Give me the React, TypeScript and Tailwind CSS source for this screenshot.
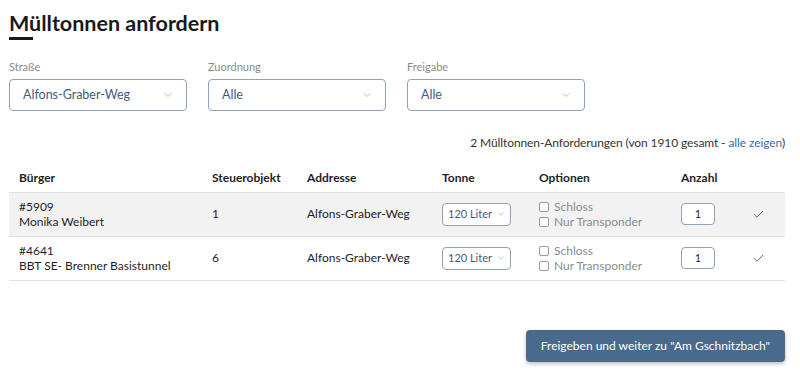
import React from 'react';
import { ChevronDown, Check } from 'lucide-react';

const font = { fontFamily: 'Lato, "Open Sans", sans-serif' };

type Row = { id: string; name: string; objekt: string; adresse: string };

const rows: Row[] = [
  { id: '#5909', name: 'Monika Weibert', objekt: '1', adresse: 'Alfons-Graber-Weg' },
  { id: '#4641', name: 'BBT SE- Brenner Basistunnel', objekt: '6', adresse: 'Alfons-Graber-Weg' },
];

const Filter: React.FC<{ label: string; value: string }> = ({ label, value }) => (
  <div className="flex flex-col w-[178px]">
    <span className="text-[11px] text-[#8a8a8a] leading-none mb-[7px]">{label}</span>
    <div className="h-8 rounded-[4px] border border-[#8fa3ba] bg-white flex items-center justify-between pl-[13px] pr-[12px]">
      <span className="text-[12.5px] text-[#3f5c7c]">{value}</span>
      <ChevronDown className="w-3 h-3 text-[#9aa5b1]" strokeWidth={1.5} />
    </div>
  </div>
);

const Box: React.FC<{ label: string }> = ({ label }) => (
  <div className="flex items-center gap-[5px] text-[12px] text-[#8c8c8c] leading-[15px]">
    <span className="w-[10px] h-[10px] border border-[#9a9a9a] rounded-[2px] bg-white" />
    {label}
  </div>
);

const App: React.FC = () => {
  return (
    <div className="w-[800px] h-[376px] bg-white text-[#1f1f1f] pl-[9px] pr-[15px] pt-[10px]" style={font}>
      <h1 className="text-[21.5px] font-bold leading-[26px] text-[#151a20]">Mülltonnen anfordern</h1>
      <div className="w-6 h-[3px] bg-[#151a20] mt-[1px]" />

      <div className="flex gap-[21px] mt-[21px]">
        <Filter label="Straße" value="Alfons-Graber-Weg" />
        <Filter label="Zuordnung" value="Alle" />
        <Filter label="Freigabe" value="Alle" />
      </div>

      <p className="text-right text-[12px] text-[#333] mt-[25px] leading-[14px] tracking-[-0.1px]">
        2 Mülltonnen-Anforderungen (von 1910 gesamt - <span className="text-[#3b6ea5]">alle zeigen</span>)
      </p>

      <table className="w-full table-fixed border-collapse mt-[10px] text-[12px]">
        <colgroup>
          <col className="w-[193px]" />
          <col className="w-[95px]" />
          <col className="w-[135px]" />
          <col className="w-[97px]" />
          <col className="w-[142px]" />
          <col className="w-[64px]" />
          <col />
        </colgroup>
        <thead>
          <tr className="h-[32px] text-left font-bold">
            <th className="pl-[10px] pt-[5px]">Bürger</th>
            <th className="pl-[10px] pt-[5px]">Steuerobjekt</th>
            <th className="pl-[10px] pt-[5px]">Addresse</th>
            <th className="pl-[10px] pt-[5px]">Tonne</th>
            <th className="pl-[10px] pt-[5px]">Optionen</th>
            <th className="pl-[10px] pt-[5px]">Anzahl</th>
            <th />
          </tr>
        </thead>
        <tbody>
          {rows.map((r, i) => (
            <tr key={r.id} className={`h-[44px] border-t border-b border-[#e2e2e2] ${i === 0 ? 'bg-[#f2f2f2]' : 'bg-white'}`}>
              <td className="pl-[10px] leading-[15px]">
                <div>{r.id}</div>
                <div>{r.name}</div>
              </td>
              <td className="pl-[10px]">{r.objekt}</td>
              <td className="pl-[10px]">{r.adresse}</td>
              <td className="pl-[10px]">
                <div className="w-[69px] h-[23px] rounded-[4px] border border-[#8fa3ba] bg-white flex items-center justify-between pl-[5px] pr-[4px]">
                  <span className="text-[11px] text-[#3f5c7c]">120 Liter</span>
                  <ChevronDown className="w-[10px] h-[10px] text-[#9aa5b1]" strokeWidth={1.5} />
                </div>
              </td>
              <td className="pl-[10px]">
                <Box label="Schloss" />
                <Box label="Nur Transponder" />
              </td>
              <td className="pl-[10px]">
                <div className="w-[34px] h-[22px] rounded-[4px] border border-[#8fa3ba] bg-white flex items-center justify-center text-[11px]">1</div>
              </td>
              <td>
                <div className="flex justify-center pr-[4px]">
                  <Check className="w-[13px] h-[13px] text-[#444]" strokeWidth={1.5} />
                </div>
              </td>
            </tr>
          ))}
        </tbody>
      </table>

      <div className="flex justify-end mt-[49px]">
        <button className="h-8 px-[15px] rounded-[4px] bg-[#4a6a8b] text-white text-[12px] shadow-[0_2px_4px_rgba(0,0,0,0.25)]">
          Freigeben und weiter zu "Am Gschnitzbach"
        </button>
      </div>
    </div>
  );
};

export default App;
